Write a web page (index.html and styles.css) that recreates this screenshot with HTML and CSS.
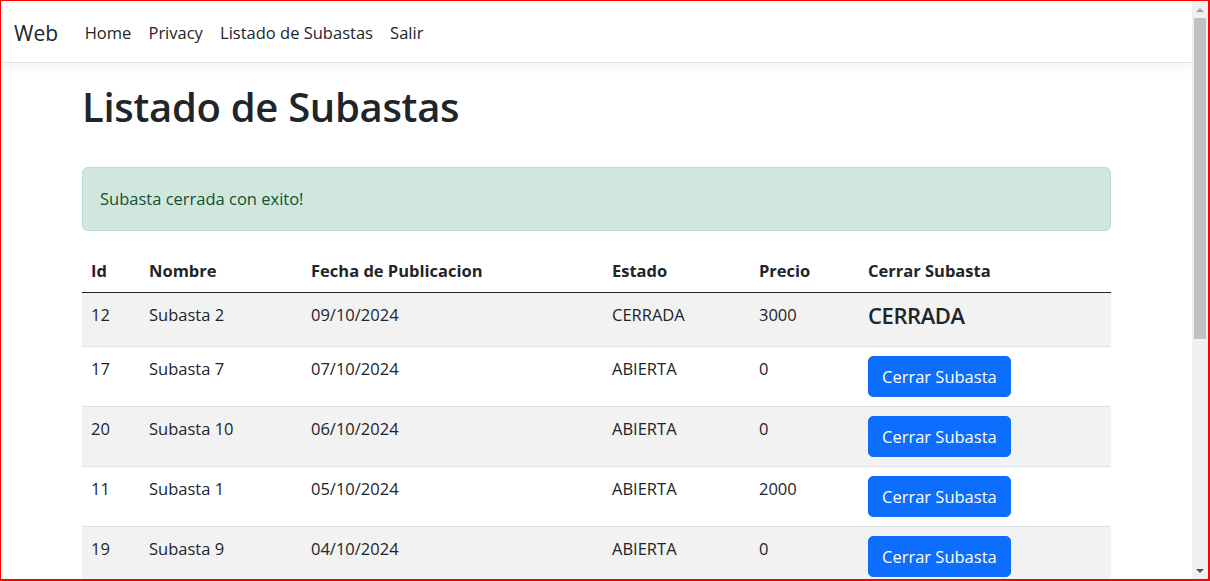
FILE: index.html
```html
<!DOCTYPE html>
<html lang="es">
<head>
<meta charset="utf-8">
<title>Listado de Subastas - Web</title>
<link rel="stylesheet" href="styles.css">
</head>
<body>
<div class="page">
  <header>
    <nav class="navbar">
      <a class="brand" href="#">Web</a>
      <ul class="nav">
        <li><a class="nav-link" href="#">Home</a></li>
        <li><a class="nav-link" href="#">Privacy</a></li>
        <li><a class="nav-link" href="#">Listado de Subastas</a></li>
        <li><a class="nav-link" href="#">Salir</a></li>
      </ul>
    </nav>
  </header>
  <main class="container">
    <h1 class="title">Listado de Subastas</h1>
    <div class="alert">Subasta cerrada con exito!</div>
    <table class="table">
      <colgroup>
        <col class="c-id"><col class="c-nombre"><col class="c-fecha"><col class="c-estado"><col class="c-precio"><col class="c-accion">
      </colgroup>
      <thead>
        <tr><th>Id</th><th>Nombre</th><th>Fecha de Publicacion</th><th>Estado</th><th>Precio</th><th>Cerrar Subasta</th></tr>
      </thead>
      <tbody>
        <tr><td>12</td><td>Subasta 2</td><td>09/10/2024</td><td>CERRADA</td><td>3000</td><td><h4 class="closed">CERRADA</h4></td></tr>
        <tr><td>17</td><td>Subasta 7</td><td>07/10/2024</td><td>ABIERTA</td><td>0</td><td><button class="btn" type="button">Cerrar Subasta</button></td></tr>
        <tr><td>20</td><td>Subasta 10</td><td>06/10/2024</td><td>ABIERTA</td><td>0</td><td><button class="btn" type="button">Cerrar Subasta</button></td></tr>
        <tr><td>11</td><td>Subasta 1</td><td>05/10/2024</td><td>ABIERTA</td><td>2000</td><td><button class="btn" type="button">Cerrar Subasta</button></td></tr>
        <tr><td>19</td><td>Subasta 9</td><td>04/10/2024</td><td>ABIERTA</td><td>0</td><td><button class="btn" type="button">Cerrar Subasta</button></td></tr>
      </tbody>
    </table>
  </main>
</div>
<div class="scrollbar" aria-hidden="true">
  <div class="arrow arrow-up"></div>
  <div class="thumb"></div>
  <div class="arrow arrow-down"></div>
</div>
<div class="frame" aria-hidden="true"></div>
</body>
</html>
```

FILE: styles.css
```css
html, body {
  margin: 0;
  padding: 0;
  height: 100%;
  overflow: hidden;
  background: #fff;
}

body {
  font-family: "Open Sans", "Noto Sans", "Liberation Sans", sans-serif;
  font-size: 16.5px;
  line-height: 1.5;
  color: #212529;
}

.page {
  width: 1191px;
  margin-left: 1px;
  padding-top: 1px;
}

/* Navbar */
.navbar {
  display: flex;
  align-items: center;
  height: 62px;
  padding: 2px 13px 0;
  box-sizing: border-box;
  background: #fff;
  border-bottom: 1px solid #e3e3e3;
  box-shadow: 0 4px 12px rgba(0, 0, 0, 0.05);
  margin-bottom: 16px;
}

.brand {
  font-size: 21px;
  line-height: 30px;
  color: #212529;
  text-decoration: none;
  margin-right: 18px;
}

.nav {
  display: flex;
  list-style: none;
  margin: 0;
  padding: 0;
}

.nav-link {
  display: block;
  padding: 0 8.6px;
  font-size: 16.5px;
  line-height: 24px;
  color: #212529;
  text-decoration: none;
}

/* Content */
.container {
  width: 1029px;
  margin: 0 auto;
}

.title {
  margin: 0 0 36px;
  padding-top: 4px;
  font-size: 40px;
  line-height: 48px;
  font-weight: 600;
  letter-spacing: -0.3px;
  color: #212529;
}

.alert {
  padding: 19px 17px;
  margin-bottom: 20px;
  line-height: 24px;
  color: #0f5132;
  background: #d1e7dd;
  border: 1px solid #badbcc;
  border-radius: 6px;
}

/* Table */
.table {
  width: 100%;
  border-collapse: collapse;
  table-layout: fixed;
  color: #212529;
}

.c-id { width: 58px; }
.c-nombre { width: 162px; }
.c-fecha { width: 301px; }
.c-estado { width: 147px; }
.c-precio { width: 109px; }
.c-accion { width: 252px; }

.table th,
.table td {
  padding: 8px 8px 8px 9px;
  text-align: left;
  vertical-align: top;
  line-height: 28px;
  border-bottom: 1px solid #dee2e6;
}

.table th {
  padding-bottom: 9px;
  line-height: 24px;
  font-weight: 700;
  border-bottom: 1px solid #212529;
}

.table tbody tr:nth-child(odd) td {
  background: #f2f2f2;
}

.closed {
  margin: 0 0 8px;
  font-size: 22px;
  line-height: 29px;
  font-weight: 600;
  letter-spacing: -0.4px;
  color: #212529;
}

.btn {
  display: block;
  margin: 1px 0;
  height: 41px;
  padding: 0 13px;
  font-family: inherit;
  font-size: 16.5px;
  line-height: 24px;
  color: #fff;
  background: #0d6efd;
  border: 1px solid #0d6efd;
  border-radius: 5px;
  cursor: pointer;
}

/* Fake window scrollbar */
.scrollbar {
  position: fixed;
  top: 1px;
  right: 2px;
  bottom: 2px;
  width: 16px;
  background: #f0f0f0;
}

.thumb {
  position: absolute;
  top: 17px;
  left: 2px;
  width: 12px;
  height: 321px;
  background: #c1c1c1;
}

.arrow {
  position: absolute;
  left: 4px;
  width: 0;
  height: 0;
  border-left: 4px solid transparent;
  border-right: 4px solid transparent;
}

.arrow-up {
  top: 7px;
  border-bottom: 4px solid #a3a3a3;
}

.arrow-down {
  bottom: 6px;
  border-top: 4px solid #505050;
}

/* Red window outline */
.frame {
  position: fixed;
  inset: 0;
  border: 1px solid #ff0000;
  border-right-width: 2px;
  border-bottom-width: 2px;
  pointer-events: none;
}
```
